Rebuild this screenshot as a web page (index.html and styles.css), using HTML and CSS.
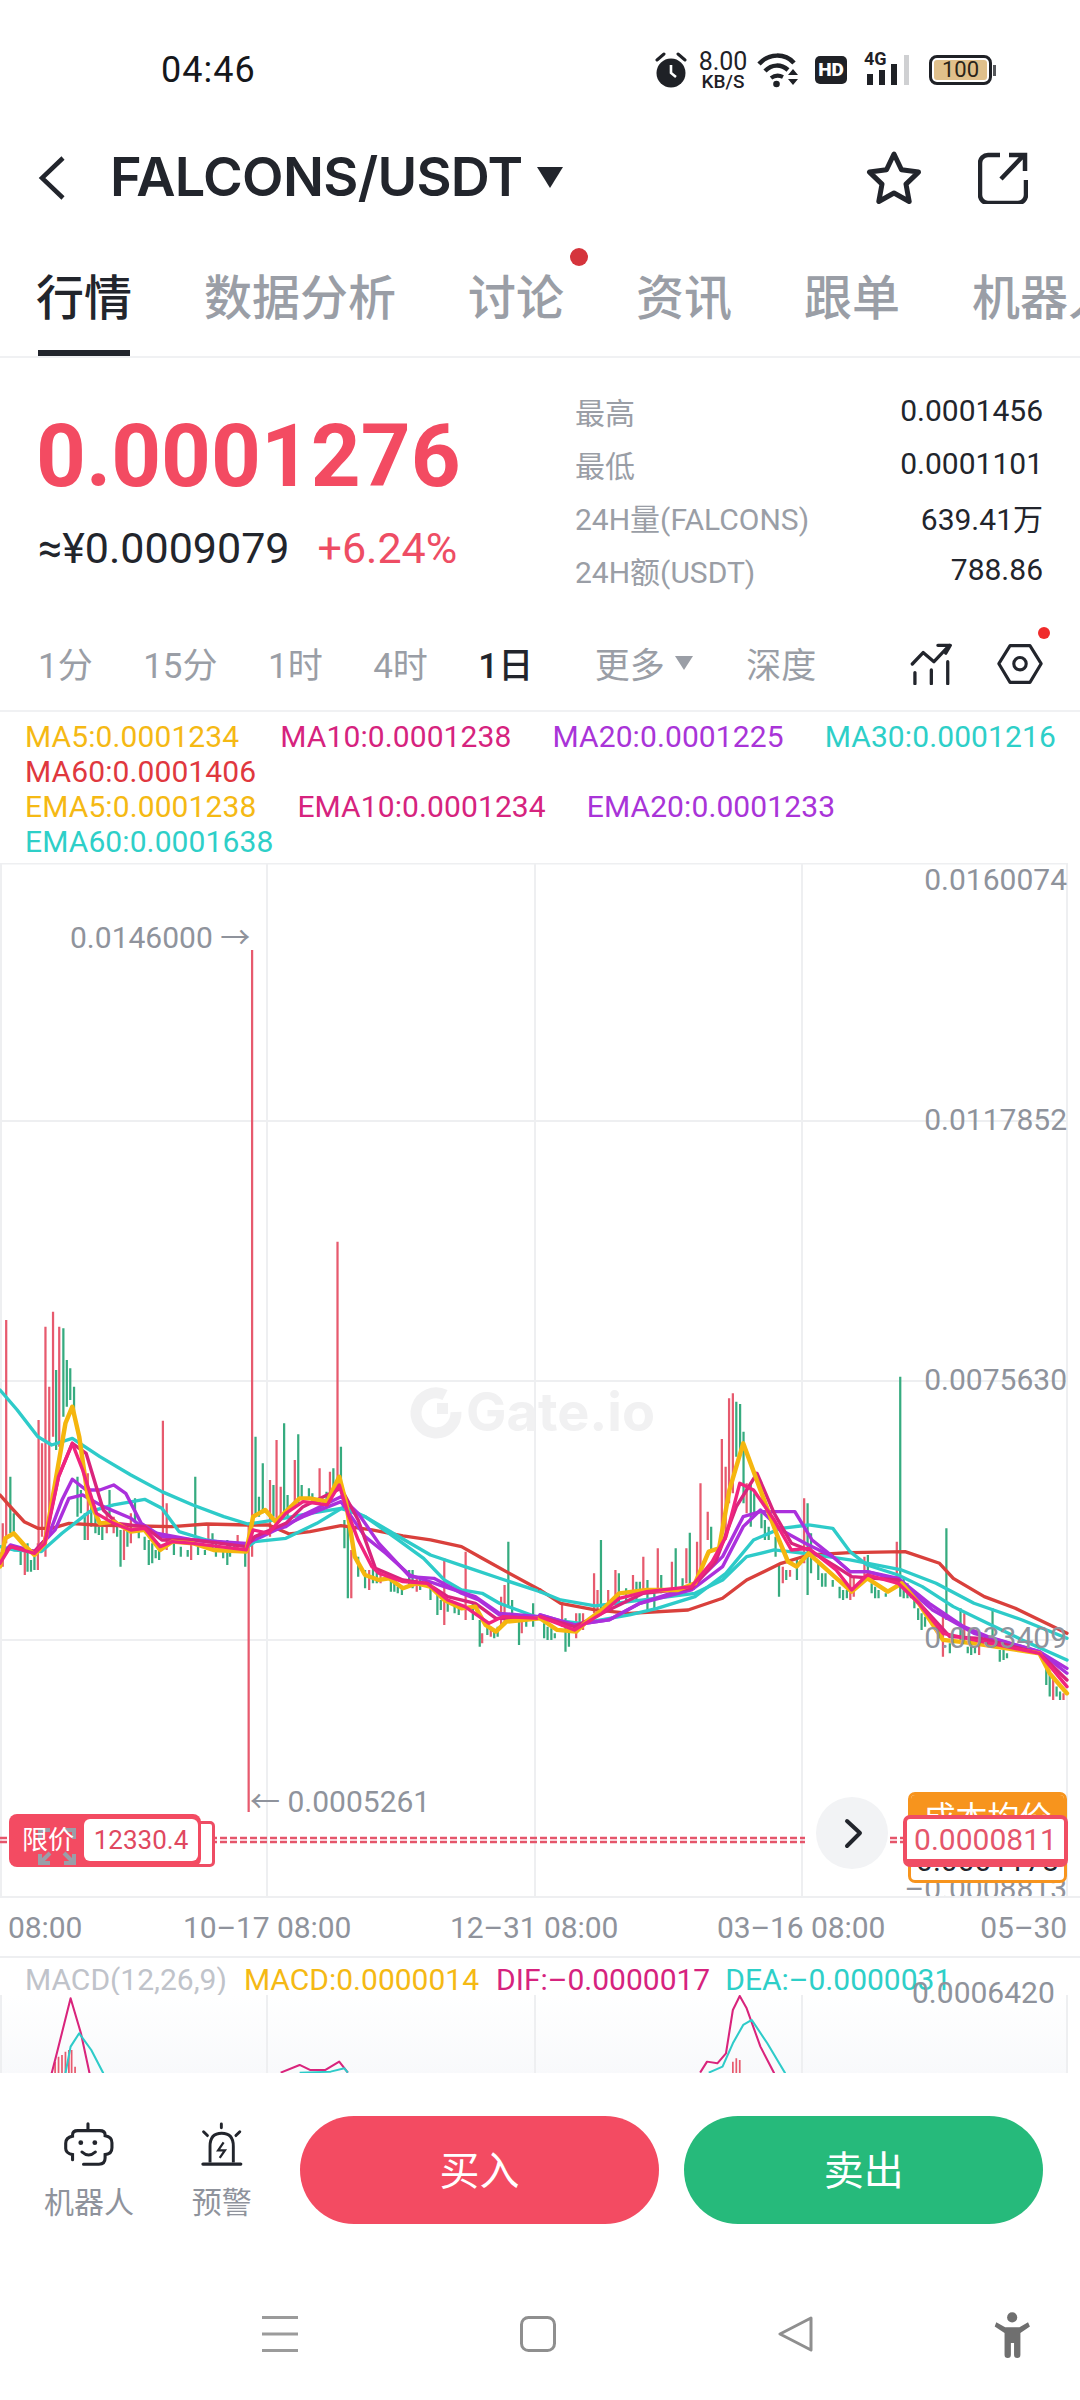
FILE: index.html
```html
<!DOCTYPE html>
<html lang="zh">
<head>
    <meta charset="utf-8">
    <title>FALCONS/USDT</title>
    <link rel="stylesheet" href="styles.css">
</head>
<body>
<div class="page">

    <!-- Status bar -->
    <div class="statusbar">
        <span class="clock">04:46</span>
        <div class="status-icons">
            <svg class="ic-alarm" viewBox="0 0 32 36"><circle cx="16" cy="21" r="14.5" fill="#1f2126"/><path d="M16 13v8l5 4" fill="none" stroke="#fff" stroke-width="2.6"/><path d="M2 8l7-6M30 8l-7-6" stroke="#1f2126" stroke-width="3" stroke-linecap="round"/></svg>
            <div class="speed"><span class="speed-num">8.00</span><span class="speed-unit">KB/S</span></div>
            <svg class="ic-wifi" viewBox="0 0 42 36"><path d="M2 12C12 1 28 1 37 11" fill="none" stroke="#1f2126" stroke-width="4.5"/><path d="M8 19c7-7 16-7 23-1" fill="none" stroke="#1f2126" stroke-width="4.5"/><path d="M14 26c4-3 8-3 12-1" fill="none" stroke="#1f2126" stroke-width="4"/><circle cx="19.500" cy="32" r="3.300" fill="#1f2126"/><path d="M31 23l5-6 5 6zM31 27l5 6 5-6z" fill="#1f2126"/></svg>
            <span class="hd">HD</span>
            <div class="signal">
                <span class="signal-g">4G</span>
                <svg class="ic-bars" viewBox="0 0 45 32"><path d="M3 20h6v11H3zM15 16h6v15h-6zM27 10h6v21h-6z" fill="#1f2126"/><path d="M40 1h5v30h-5z" fill="#cfd0d2"/></svg>
            </div>
            <div class="battery"><span class="battery-level">100</span></div>
        </div>
    </div>

    <!-- Title -->
    <div class="topbar">
        <svg class="ic-back" viewBox="0 0 28 44"><path d="M25 2L4 22l21 20" fill="none" stroke="#22252c" stroke-width="4.500"/></svg>
        <span class="pair">FALCONS/USDT</span>
        <span class="pair-caret"></span>
        <svg class="ic-star" viewBox="0 0 56 54"><path d="M28 3l7.500 15.800 17 2.300-12.500 12 3.200 17.400L28 42l-15.200 8.500L16 33.100 3.500 21.100l17-2.300z" fill="none" stroke="#22252c" stroke-width="5" stroke-linejoin="round"/></svg>
        <svg class="ic-share" viewBox="0 0 50 52"><path d="M22 3H10a8 8 0 0 0-8 8v32a8 8 0 0 0 8 8h30a8 8 0 0 0 8-8V28" fill="none" stroke="#22252c" stroke-width="4.500"/><path d="M23 27L46 3M31 3h16v16" fill="none" stroke="#22252c" stroke-width="4.500"/></svg>
    </div>

    <!-- Tabs -->
    <div class="tabs">
        <span class="tab active">行情</span>
        <span class="tab">数据分析</span>
        <span class="tab">讨论<i class="tab-dot"></i></span>
        <span class="tab">资讯</span>
        <span class="tab">跟单</span>
        <span class="tab">机器人</span>
    </div>

    <!-- Price summary -->
    <div class="summary">
        <div class="summary-left">
            <div class="price">0.0001276</div>
            <div class="price-sub"><span class="fiat">≈¥0.0009079</span><span class="change">+6.24%</span></div>
        </div>
        <div class="stats">
            <div class="stat"><span class="stat-label">最高</span><span class="stat-value">0.0001456</span></div>
            <div class="stat"><span class="stat-label">最低</span><span class="stat-value">0.0001101</span></div>
            <div class="stat"><span class="stat-label">24H量(FALCONS)</span><span class="stat-value">639.41万</span></div>
            <div class="stat"><span class="stat-label">24H额(USDT)</span><span class="stat-value">788.86</span></div>
        </div>
    </div>

    <!-- Periods -->
    <div class="periods">
        <span class="period">1分</span>
        <span class="period">15分</span>
        <span class="period">1时</span>
        <span class="period">4时</span>
        <span class="period current">1日</span>
        <span class="period more">更多<i class="more-caret"></i></span>
        <span class="period depth">深度</span>
        <svg class="ic-indicator" viewBox="56 68 126 128"><path d="M62 132L95 97l33 28 47-50M140 75h38l-14 24" fill="none" stroke="#22252c" stroke-width="10" stroke-linecap="round" stroke-linejoin="round"/><path d="M70 158v34M120 150v42M170 125v67" fill="none" stroke="#22252c" stroke-width="10" stroke-linecap="round"/></svg>
        <div class="settings">
            <svg class="ic-hex" viewBox="316 66 148 130"><path d="M358 72h64l36 58-36 60h-64l-36-60z" fill="none" stroke="#22252c" stroke-width="10" stroke-linejoin="round"/><circle cx="390" cy="130" r="20" fill="none" stroke="#22252c" stroke-width="10"/></svg>
            <i class="settings-dot"></i>
        </div>
    </div>

    <!-- Indicator legend -->
    <div class="legend">
        <div class="legend-row">
            <span class="c-yellow">MA5:0.0001234</span>
            <span class="c-pink">MA10:0.0001238</span>
            <span class="c-purple">MA20:0.0001225</span>
            <span class="c-teal">MA30:0.0001216</span>
            <span class="c-red">MA60:0.0001406</span>
        </div>
        <div class="legend-row">
            <span class="c-yellow">EMA5:0.0001238</span>
            <span class="c-pink">EMA10:0.0001234</span>
            <span class="c-purple">EMA20:0.0001233</span>
            <span class="c-teal">EMA60:0.0001638</span>
        </div>
    </div>

    <!-- Candle chart -->
    <div class="chart">
        <svg class="chart-svg" viewBox="0 863 1080 1035">
            <g class="grid">
                <path d="M0 863.500H1067M0 1121H1067M0 1381H1067M0 1640H1067M1 863V1898M267 863V1898M535 863V1898M802 863V1898M1067 863V1898"/>
            </g>
            <text class="watermark" x="466" y="1431">Gate.io</text>
            <path class="watermark-logo" d="M445 1395a20 20 0 1 0 11 17"/>
            <rect class="watermark-dot" x="437" y="1403" width="11" height="11"/>

            <g transform="translate(0,1250) scale(.3444,.3333)">
                <path class="wick up" d="M18 210V880M8 820V950M72 900V975M110 880V960M112 510V900M122 580V860M132 230V920M143 410V800M154 185V560M172 230V590M255 670V870M310 790V850M330 800V850M360 840V930M380 790V880M473 512V850M484 760V900M555 880V930M605 820V880M690 855V905M722 820V1686M732 -900V920M784 690V860M803 570V830M815 710V800M856 630V760M928 655V760M958 665V750M980 -25V720M1020 900V1045M1072 960V1020M1105 960V1000M1210 980V1025M1290 925V1125M1352 905V1110M1400 1150V1180M1425 1130V1160M1455 1040V1130M1465 1005V1120M1515 1115V1150"/>
                <path class="wick down" d="M30 680V850M40 790V850M60 900V945M80 880V965M90 930V965M100 920V960M163 360V600M184 235V500M194 330V470M204 355V450M215 410V500M225 680V800M235 720V790M246 790V870M265 770V830M277 790V850M287 830V855M297 830V870M318 720V800M340 820V860M350 840V950M370 840V890M392 745V820M403 840V865M420 860V900M432 870V945M442 880V940M452 900V925M462 880V930M505 880V915M525 890V920M545 900V920M567 680V860M575 890V915M595 900V915M617 850V900M627 880V920M648 900V925M660 870V945M668 880V920M680 885V900M712 900V950M742 560V800M752 740V800M763 640V790M794 705V800M825 520V790M835 735V800M866 553V760M876 705V750M897 715V750M907 730V760M948 725V760M968 655V710M990 590V700M1000 810V895M1010 830V1045M1040 920V980M1060 960V1015M1083 950V1000M1094 965V1000M1135 985V1025M1145 1000V1025M1155 1010V1030M1167 1010V1035M1188 960V1005M1198 960V1015M1220 985V1020M1250 1000V1050M1270 1030V1095M1280 1050V1080M1300 1050V1085M1320 1065V1090M1332 1070V1095M1373 1060V1110M1393 1110V1190M1415 1130V1155M1435 1140V1165M1445 1130V1160M1476 875V1070M1487 1050V1110M1507 1110V1185M1528 1090V1130M1548 1060V1130"/>
                <polyline class="ln ln-red" points="0,735 30,770 70,815 110,835 150,835 200,820 280,825 400,828 500,830 600,822 720,825 780,825 840,852 900,845 990,827 1080,840 1170,858 1250,870 1340,890 1400,925 1470,965 1568,1020"/>
                <polyline class="ln ln-teal" points="0,420 50,480 110,560 150,585 210,565 290,620 380,675 470,725 560,765 650,800 720,822 800,810 900,790 990,775 1060,800 1150,855 1250,915 1350,950 1450,985 1568,1025"/>
                <polyline class="ln ln-teal" points="0,890 40,900 120,905 180,850 260,785 330,765 420,748 470,775 520,845 600,870 720,890 740,875 830,865 920,820 1000,770 1060,800 1150,865 1230,925 1290,990 1340,1020 1400,1030 1450,1060 1568,1105"/>
                <polyline class="ln ln-purple" points="0,915 30,890 100,905 160,840 200,745 240,735 300,770 380,805 430,845 560,870 715,880 760,860 880,800 990,755 1060,860 1120,910 1190,975 1290,1010 1380,1040 1450,1090 1568,1100"/>
                <polyline class="ln ln-purple" points="0,920 30,885 100,905 140,860 180,750 210,688 250,720 290,720 330,705 365,730 410,820 470,860 560,870 715,885 760,850 830,830 880,795 990,740 1040,790 1100,880 1190,980 1260,985 1340,1030 1390,1050 1450,1095 1568,1105"/>
                <polyline class="ln ln-pink" points="0,925 30,890 100,905 130,870 170,680 210,580 250,610 300,780 340,820 420,830 470,870 560,870 715,890 740,860 830,820 880,770 990,715 1040,810 1090,955 1170,990 1240,1000 1300,1040 1380,1060 1440,1105 1568,1105"/>
                <polyline class="ln ln-yellow" points="0,950 15,865 40,850 70,885 100,915 130,880 160,700 190,520 210,470 230,560 255,740 290,820 330,815 380,845 420,840 465,900 500,875 560,880 620,900 715,905 735,800 770,780 800,815 830,785 870,745 900,745 950,755 985,680 1005,760 1030,920 1060,975 1100,990 1130,985 1170,1015 1210,1000 1250,1010 1290,1050 1340,1075 1380,1070 1410,1125 1440,1145 1470,1115 1568,1105"/>
                <polyline class="ln ln-hot" points="0,940 30,890 100,910 130,880 170,680 210,580 240,660 280,790 330,820 380,840 420,835 465,890 500,875 560,880 715,900 735,840 780,850 830,790 880,755 950,765 985,705 1010,790 1040,870 1080,950 1100,970 1170,995 1240,1000 1300,1050 1350,1070 1420,1120 1460,1100 1568,1105"/>
            </g>

            <g transform="translate(540,1250) scale(.3444,.3333)">
                <path class="wick up" d="M64 1060V1130M105 1090V1165M125 1090V1140M157 970V1090M167 1020V1080M198 1020V1085M219 960V1040M270 975V1030M300 920V1030M342 895V1020M383 935V1020M425 895V1000M456 875V980M466 700V970M487 785V870M528 567V870M539 650V870M549 445V760M560 430V730M600 700V790M705 950V1000M726 960V980M767 745V940M901 970V1050M911 980V1040M942 920V990M1036 875V1010M1170 1090V1220M1232 1090V1180M1275 1180V1215M1490 1280V1350M1520 1330V1350"/>
                <path class="wick down" d="M12 1120V1165M22 1130V1170M33 1135V1170M43 1150V1165M74 1105V1205M84 1140V1190M115 1090V1140M177 870V1090M229 970V1060M250 1015V1050M280 995V1050M290 995V1030M312 990V1080M332 1030V1075M352 975V1030M394 895V1020M414 985V1015M435 848V1000M446 1000V1020M497 830V900M570 455V620M581 462V600M591 545V760M612 700V830M622 730V800M643 790V835M653 810V870M664 830V870M684 860V920M694 940V1040M715 960V990M746 930V990M777 760V1035M787 850V970M808 940V990M819 970V1010M829 970V1010M850 990V1010M870 1010V1045M880 1020V1050M891 1020V1045M952 915V980M963 1000V1030M973 1010V1045M983 1020V1045M1004 1030V1040M1046 380V1040M1056 985V1045M1067 1000V1045M1077 1020V1045M1087 1050V1075M1098 1075V1110M1108 1090V1140M1118 1100V1130M1180 835V1110M1190 1180V1210M1221 1075V1170M1242 1190V1210M1252 1190V1215M1263 1190V1210M1314 1075V1170M1335 1200V1235M1346 1200V1230M1356 1210V1225M1470 1240V1305M1480 1270V1340M1500 1310V1340M1510 1325V1350"/>
                <polyline class="ln ln-red" points="0,1020 60,1060 160,1080 260,1090 430,1080 530,1045 600,990 700,940 780,915 900,908 1060,905 1160,940 1200,985 1290,1040 1380,1075 1530,1150"/>
                <polyline class="ln ln-teal" points="0,1025 60,1050 160,1068 300,1050 450,1030 530,990 600,920 680,900 780,912 900,930 1050,960 1150,1000 1260,1060 1400,1110 1530,1165"/>
                <polyline class="ln ln-teal" points="0,1105 120,1120 260,1095 340,1075 450,1040 540,970 620,870 700,835 780,825 850,835 900,905 950,945 1040,975 1110,1010 1200,1070 1280,1110 1400,1170 1530,1230"/>
                <polyline class="ln ln-purple" points="0,1095 100,1125 200,1110 290,1060 440,1020 530,950 590,830 640,780 700,840 770,880 850,920 900,965 950,965 1040,990 1140,1080 1260,1150 1450,1205 1530,1255"/>
                <polyline class="ln ln-purple" points="0,1095 100,1125 200,1110 290,1060 440,1010 530,920 590,800 640,785 740,785 790,870 850,920 900,965 950,965 1040,985 1130,1060 1230,1130 1300,1160 1450,1205 1530,1270"/>
                <polyline class="ln ln-pink" points="0,1100 100,1130 180,1090 300,1030 440,1015 510,935 570,770 630,670 680,790 730,880 780,900 860,950 905,980 1040,990 1110,1070 1190,1160 1280,1165 1450,1210 1530,1290"/>
                <polyline class="ln ln-yellow" points="0,1105 50,1140 105,1145 140,1110 180,1080 230,1030 310,1020 400,1020 450,1000 490,905 520,895 550,720 590,580 640,720 690,860 720,935 745,950 780,910 850,975 905,1025 950,985 1010,1025 1050,1000 1100,1060 1170,1170 1260,1180 1450,1210 1480,1270 1530,1330"/>
                <polyline class="ln ln-hot" points="0,1100 100,1140 180,1090 230,1045 310,1025 440,1010 500,935 540,860 580,700 620,720 680,810 730,900 780,895 860,960 905,1020 950,975 1040,1000 1100,1060 1170,1150 1260,1170 1450,1210 1530,1310"/>
            </g>

            <!-- limit order line -->
            <path class="limit-line" d="M0 1838H805M890 1838H905M0 1842H805M890 1842H905"/>
            <circle class="next-bg" cx="852" cy="1833" r="36"/>
            <path class="next-arrow" d="M847 1821l13 12-13 13"/>
        </svg>

        <span class="axis-y" style="top: 0px">0.0160074</span>
        <span class="axis-y" style="top: 240px">0.0117852</span>
        <span class="axis-y" style="top: 500px">0.0075630</span>
        <span class="axis-y" style="top: 758px">0.0033409</span>
        <div class="axis-y-clip"><span>–0.0008813</span></div>

        <span class="mark mark-high">0.0146000 →</span>
        <span class="mark mark-low">← 0.0005261</span>

        <div class="limit-back"></div>
        <div class="limit-badge">
            <svg class="ic-expand" viewBox="0 0 38 37"><path d="M2 11V2h10M26 2h10v9M2 26v9h10M26 35h10v-9M4 33l8-8M34 33l-8-8" fill="none" stroke="#9a9ea8" stroke-width="4"/></svg>
            <span class="limit-name">限价</span>
            <span class="limit-value">12330.4</span>
        </div>

        <div class="cost">
            <span class="cost-name">成本均价</span>
            <span class="cost-value">0.0001178</span>
        </div>
        <div class="last-price">0.0000811</div>
    </div>

    <!-- Time axis -->
    <div class="axis-x">
        <span class="t1">08:00</span>
        <span class="t2">10–17 08:00</span>
        <span class="t3">12–31 08:00</span>
        <span class="t4">03–16 08:00</span>
        <span class="t5">05–30</span>
    </div>

    <!-- MACD -->
    <div class="macd">
        <div class="macd-legend">
            <span class="c-grey">MACD(12,26,9)</span>
            <span class="c-yellow">MACD:0.0000014</span>
            <span class="c-pink">DIF:–0.0000017</span>
            <span class="c-teal dea">DEA:–0.0000031</span>
        </div>
        <svg class="macd-svg" viewBox="0 1995 1080 78">
            <defs>
                <linearGradient id="macdBg" x1="0" y1="0" x2="0" y2="1">
                    <stop offset="0" stop-color="#fff"/>
                    <stop offset="1" stop-color="#f8f9fb"/>
                </linearGradient>
            </defs>
            <rect x="0" y="1995" width="1067" height="78" fill="url(#macdBg)"/>
            <g class="grid"><path d="M1 1995V2073M267 1995V2073M535 1995V2073M802 1995V2073M1067 1995V2073"/></g>
            <g transform="translate(0,1760) scale(.3444,.3333)">
                <path class="macd-bars" d="M160 905V940M170 890V940M180 885V940M190 875V940M200 870V940M208 870V940M218 920V940"/>
                <polyline class="macd-ln ln-pink" points="150,940 165,880 205,715 235,820 260,940"/>
                <polyline class="macd-ln ln-teal" points="190,940 205,860 230,820 265,870 300,940"/>
                <polyline class="macd-ln ln-pink" points="815,938 870,915 900,930 945,930 985,905 1010,938"/>
                <polyline class="macd-ln ln-teal" points="870,938 960,935 1000,925 1010,938"/>
            </g>
            <g transform="translate(540,1760) scale(.3444,.3333)">
                <path class="macd-bars" d="M560 905V940M570 895V940M580 900V940"/>
                <polyline class="macd-ln ln-pink" points="465,938 485,905 515,910 540,880 560,750 580,708 600,745 640,860 680,940"/>
                <polyline class="macd-ln ln-teal" points="490,938 530,920 560,850 590,795 615,780 660,850 712,940"/>
            </g>
        </svg>
        <span class="macd-axis">0.0006420</span>
    </div>

    <!-- Bottom actions -->
    <div class="actions">
        <div class="action robot">
            <svg class="ic-robot" viewBox="78 36 146 126"><path d="M148 40V60M135 158H180Q198 158 198 140V130Q218 128 218 110V95Q218 78 198 75V72Q198 60 182 60H118Q103 60 103 72V76Q83 80 83 97V112Q83 126 103 130V145" fill="none" stroke="#22252c" stroke-width="9" stroke-linecap="round"/><circle cx="127" cy="95" r="7" fill="#22252c"/><circle cx="168" cy="95" r="7" fill="#22252c"/><path d="M130 122Q150 140 170 122" fill="none" stroke="#22252c" stroke-width="8" stroke-linecap="round"/></svg>
            <span>机器人</span>
        </div>
        <div class="action alert">
            <svg class="ic-siren" viewBox="482 30 130 136"><path d="M510 155V105Q510 65 546 65Q582 65 582 105V155" fill="none" stroke="#22252c" stroke-width="9"/><path d="M488 160H605" stroke="#22252c" stroke-width="10" stroke-linecap="round"/><path d="M552 93L535 118H556L540 141" fill="none" stroke="#22252c" stroke-width="7"/><path d="M545 36V48M490 60L502 72M602 60L590 72" stroke="#22252c" stroke-width="9" stroke-linecap="round"/></svg>
            <span>预警</span>
        </div>
        <div class="btn btn-buy">买入</div>
        <div class="btn btn-sell">卖出</div>
    </div>

    <!-- System navigation -->
    <div class="sysnav">
        <svg class="ic-menu" viewBox="0 0 36 36"><path d="M0 1.500h36M0 18h36M0 34.500h36" stroke="#9b9b9b" stroke-width="3"/></svg>
        <svg class="ic-home" viewBox="0 0 36 36"><rect x="1.500" y="1.500" width="33" height="33" rx="7" fill="none" stroke="#8f8f8f" stroke-width="3"/></svg>
        <svg class="ic-tri" viewBox="0 0 36 36"><path d="M33 2L2 18l31 16z" fill="none" stroke="#8f8f8f" stroke-width="3" stroke-linejoin="round"/></svg>
        <svg class="ic-person" viewBox="25 30 113 145"><circle cx="82" cy="47" r="16" fill="#6f6f6f"/><path d="M32 62L60 78H105L132 62L138 76L108 96V165a10 10 0 0 1-20 0V128H78V165a10 10 0 0 1-20 0V96L27 76Z" fill="#6f6f6f"/></svg>
    </div>
</div>
</body>
</html>
```

FILE: styles.css
```css
* {
    box-sizing: border-box;
}

body {
    margin: 0;
    background: #fff;
    font-family: Roboto, "Noto Sans CJK SC", sans-serif;
    color: #22252c;
}

.page {
    width: 1080px;
    height: 2400px;
    overflow: hidden;
}

/* Status bar */
.statusbar {
    height: 130px;
    display: flex;
    align-items: center;
    padding: 10px 88px 0 161px;
    justify-content: space-between;
}

.clock {
    font-size: 36px;
    letter-spacing: 1px;
    color: #15171b;
}

.status-icons {
    display: flex;
    align-items: center;
}

.ic-alarm {
    width: 32px;
    height: 36px;
}

.speed {
    display: flex;
    flex-direction: column;
    align-items: center;
    width: 52px;
    margin-left: 10px;
    color: #1f2126;
}

.speed-num {
    font-size: 25px;
    line-height: 22px;
}

.speed-unit {
    font-size: 19px;
    line-height: 17px;
    font-weight: 500;
}

.ic-wifi {
    width: 42px;
    height: 36px;
    margin-left: 8px;
}

.hd {
    width: 32px;
    height: 28px;
    margin-left: 16px;
    background: #1f2126;
    color: #fff;
    border-radius: 5px;
    font-size: 19px;
    font-weight: 900;
    line-height: 28px;
    text-align: center;
}

.signal {
    position: relative;
    width: 45px;
    height: 32px;
    margin-left: 17px;
}

.signal-g {
    position: absolute;
    left: 0;
    top: -4px;
    font-size: 18px;
    line-height: 18px;
    font-weight: 700;
    color: #1f2126;
}

.ic-bars {
    width: 45px;
    height: 32px;
    display: block;
}

.battery {
    position: relative;
    width: 63px;
    height: 30px;
    margin-left: 20px;
    border: 3px solid #1f2126;
    border-radius: 8px;
    padding: 2px;
}

.battery:after {
    content: "";
    position: absolute;
    right: -7px;
    top: 7px;
    width: 3px;
    height: 11px;
    background: #55575b;
}

.battery-level {
    display: block;
    height: 20px;
    background: #e0c08b;
    border-radius: 3px;
    font-size: 22px;
    line-height: 20px;
    text-align: center;
    color: #2a2418;
}

/* Title */
.topbar {
    height: 95px;
    display: flex;
    align-items: center;
    padding: 0 52px 0 38px;
}

.ic-back {
    width: 28px;
    height: 44px;
}

.pair {
    margin-left: 44px;
    font-family: Inter, Roboto, sans-serif;
    font-size: 54px;
    line-height: 60px;
    margin-top: -2px;
    font-weight: 600;
    letter-spacing: -0.7px;
    color: #22252c;
}

.pair-caret {
    margin-left: 15px;
    width: 0;
    height: 0;
    border-left: 13px solid transparent;
    border-right: 13px solid transparent;
    border-top: 21px solid #22252c;
}

.ic-star {
    margin-left: auto;
    width: 56px;
    height: 54px;
}

.ic-share {
    margin-left: 56px;
    width: 50px;
    height: 52px;
}

/* Tabs */
.tabs {
    height: 133px;
    display: flex;
    gap: 72px;
    padding: 49px 0 0 36px;
    border-bottom: 2px solid #f0f1f3;
    white-space: nowrap;
    overflow: hidden;
}

.tab {
    position: relative;
    height: 82px;
    font-size: 48px;
    line-height: 50px;
    font-weight: 500;
    color: #9a9ea6;
    flex-shrink: 0;
}

.tab.active {
    color: #22252c;
}

.tab.active:after {
    content: "";
    position: absolute;
    left: 2px;
    right: 2px;
    bottom: 0;
    height: 6px;
    background: #22252c;
}

.tab-dot {
    position: absolute;
    right: -24px;
    top: -26px;
    width: 18px;
    height: 18px;
    border-radius: 50%;
    background: #d5343c;
}

/* Price summary */
.summary {
    height: 266px;
    display: flex;
}

.summary-left {
    width: 575px;
    padding: 48px 0 0 36px;
}

.price {
    height: 100px;
    font-size: 87px;
    line-height: 100px;
    font-weight: 700;
    color: #f34b62;
}

.price-sub {
    margin-top: 17px;
    margin-left: 2px;
    display: flex;
    align-items: center;
    height: 50px;
    font-size: 43px;
    line-height: 50px;
}

.fiat {
    color: #22252c;
}

.change {
    margin-left: 28px;
    color: #ee4d64;
}

.stats {
    width: 468px;
    padding-top: 26px;
}

.stat {
    height: 53px;
    display: flex;
    justify-content: space-between;
    align-items: center;
    font-size: 30px;
}

.stat-label {
    color: #9a9ea6;
}

.stat-value {
    color: #22252c;
}

/* Periods */
.periods {
    height: 88px;
    display: flex;
    align-items: center;
    gap: 50.500px;
    padding: 0 37px 9px 38px;
    border-bottom: 2px solid #f0f1f3;
    font-size: 35px;
    color: #9a9ea6;
}

.period.current {
    color: #22252c;
    font-weight: 500;
}

.period.more {
    margin-left: 11px;
    display: flex;
    align-items: center;
}

.more-caret {
    margin-left: 10px;
    width: 0;
    height: 0;
    border-left: 9px solid transparent;
    border-right: 9px solid transparent;
    border-top: 14px solid #9a9ea6;
}

.period.depth {
    margin-left: 3px;
}

.ic-indicator {
    margin-left: auto;
    margin-top: 3px;
    width: 42px;
    height: 42px;
}

.settings {
    position: relative;
    width: 46px;
    height: 42px;
    margin-left: -5px;
    margin-top: 3px;
}

.ic-hex {
    display: block;
    width: 46px;
    height: 42px;
}

.settings-dot {
    position: absolute;
    right: -7px;
    top: -16px;
    width: 12px;
    height: 12px;
    border-radius: 50%;
    background: #f02b2b;
}

/* Legend */
.legend {
    height: 151px;
    padding: 7px 0 0 25px;
    font-size: 30px;
    line-height: 35px;
    letter-spacing: 0.1px;
    white-space: nowrap;
}

.legend-row {
    display: flex;
    flex-wrap: wrap;
    column-gap: 41px;
    width: 1040px;
}

.c-yellow { color: #f5b914; }
.c-pink { color: #d6237e; }
.c-purple { color: #a934d8; }
.c-teal { color: #2ecfc8; }
.c-red { color: #e0383e; }
.c-grey { color: #c0c3ca; }

/* Chart */
.chart {
    position: relative;
    height: 1035px;
    overflow: hidden;
    font-size: 30px;
    color: #8f939c;
    border-bottom: 2px solid #eeeff1;
}

.chart-svg {
    display: block;
    width: 1080px;
    height: 1035px;
}

.grid path {
    fill: none;
    stroke: #eeeff1;
    stroke-width: 2;
}

.watermark {
    font-family: Inter, Roboto, sans-serif;
    font-size: 54px;
    font-weight: 700;
    fill: #f1f1f2;
}

.watermark-logo {
    fill: none;
    stroke: #f1f1f2;
    stroke-width: 11;
}

.watermark-dot {
    fill: #f1f1f2;
}

.wick {
    fill: none;
    stroke-width: 6.500;
}

.wick.up { stroke: #e75a6e; }
.wick.down { stroke: #36ab7f; }

.ln {
    fill: none;
    stroke-width: 10;
    stroke-linejoin: round;
    stroke-linecap: round;
}

.ln-red { stroke: #d9403c; }
.ln-teal { stroke: #2ecbc9; }
.ln-purple { stroke: #ab30dc; }
.ln-pink { stroke: #d9247c; }
.ln-hot { stroke: #f0247e; }
.ln-yellow { stroke: #f5b60e; stroke-width: 13; }

.limit-line {
    fill: none;
    stroke: #e5566b;
    stroke-width: 2.500;
    stroke-dasharray: 7 3;
}

.next-bg {
    fill: #f2f3f5;
}

.next-arrow {
    fill: none;
    stroke: #22252c;
    stroke-width: 4;
    stroke-linejoin: round;
    stroke-linecap: round;
}

.axis-y {
    position: absolute;
    right: 13px;
    line-height: 34px;
}

.axis-y-clip {
    position: absolute;
    right: 13px;
    top: 1009px;
    line-height: 34px;
}

.mark {
    position: absolute;
    line-height: 34px;
    white-space: nowrap;
}

.mark-high {
    left: 70px;
    top: 58px;
}

.mark-low {
    left: 250px;
    top: 922px;
}

.limit-back {
    position: absolute;
    left: 150px;
    top: 958px;
    width: 65px;
    height: 46px;
    background: #fff;
    border: 3px solid #ee4d64;
    border-radius: 5px;
}

.limit-badge {
    position: absolute;
    left: 9px;
    top: 951px;
    width: 192px;
    height: 53px;
    padding: 5px 3px 6px 13px;
    display: flex;
    align-items: center;
    background: #f34b62;
    border-radius: 8px;
}

.ic-expand {
    position: absolute;
    left: 29px;
    top: 14px;
    width: 38px;
    height: 37px;
}

.limit-name {
    position: relative;
    font-size: 26px;
    line-height: 36px;
    color: #fff;
    white-space: nowrap;
}

.limit-value {
    margin-left: 10px;
    flex: 1;
    height: 42px;
    background: #fff;
    border-radius: 6px;
    font-size: 26px;
    line-height: 42px;
    text-align: center;
    color: #e0485f;
}

.cost {
    position: absolute;
    left: 908px;
    top: 929px;
    width: 159px;
    height: 91px;
    background: #fff;
    border: 3px solid #f7941d;
    border-radius: 7px;
    overflow: hidden;
    text-align: center;
    white-space: nowrap;
}

.cost-name {
    display: block;
    height: 50px;
    background: #f7941d;
    color: #fff;
    font-size: 32px;
    line-height: 46px;
}

.cost-value {
    display: block;
    font-size: 30px;
    line-height: 30px;
    margin-top: 1px;
    color: #22252c;
}

.last-price {
    position: absolute;
    left: 903px;
    top: 952px;
    width: 165px;
    height: 52px;
    background: #fff;
    border: 4px solid #f04d63;
    border-bottom-width: 8px;
    border-radius: 7px;
    font-size: 30px;
    line-height: 42px;
    text-align: center;
    color: #e5566b;
}

/* Time axis */
.axis-x {
    position: relative;
    height: 60px;
    border-bottom: 2px solid #eeeff1;
    font-size: 30px;
    line-height: 60px;
    letter-spacing: -0.1px;
    color: #8f939c;
}

.axis-x span {
    position: absolute;
    white-space: nowrap;
}

.t1 { left: 8px; }
.t2 { left: 183px; }
.t3 { left: 450px; }
.t4 { left: 717px; }
.t5 { right: 13px; }

/* MACD */
.macd {
    position: relative;
    height: 115px;
}

.macd-legend {
    height: 37px;
    padding-left: 25px;
    display: flex;
    gap: 17px;
    font-size: 30px;
    line-height: 44px;
    white-space: nowrap;
}

.macd-legend .dea {
    margin-left: -2px;
}

.macd-svg {
    display: block;
    width: 1080px;
    height: 78px;
}

.macd-ln {
    fill: none;
    stroke-width: 6;
    stroke-linejoin: round;
}

.macd-bars {
    fill: none;
    stroke: #e75a6e;
    stroke-width: 5;
}

.macd-axis {
    position: absolute;
    left: 912px;
    top: 18px;
    font-size: 30px;
    line-height: 34px;
    color: #8f939c;
}

/* Bottom actions */
.actions {
    height: 207px;
    display: flex;
    align-items: flex-start;
    padding: 43px 37px 0 0;
    background: #fff;
}

.action {
    display: flex;
    flex-direction: column;
    align-items: center;
    font-size: 30px;
    line-height: 40px;
    color: #8f939c;
}

.action svg {
    display: block;
    height: 44px;
    margin: 6px 0 17px;
}

.action.robot {
    width: 178px;
}

.action.alert {
    width: 44px;
    margin-left: 22px;
    white-space: nowrap;
}

.ic-robot { width: 50px; }
.ic-siren { width: 44px; }

.btn {
    height: 108px;
    width: 360px;
    border-radius: 54px;
    font-size: 40px;
    line-height: 112px;
    text-align: center;
    color: #fff;
}

.btn-buy {
    margin-left: 56px;
    background: #f34b62;
}

.btn-sell {
    margin-left: 24px;
    width: 359px;
    margin-left: 25px;
    background: #26ba7b;
}

/* System navigation */
.sysnav {
    height: 120px;
    position: relative;
    display: flex;
    align-items: flex-start;
    padding: 36px 0 0 262px;
}

.ic-menu, .ic-home, .ic-tri {
    width: 36px;
    height: 36px;
}

.ic-home {
    margin-left: 222px;
}

.ic-tri {
    margin-left: 222px;
}

.ic-person {
    width: 36px;
    height: 46px;
    margin-left: 180px;
    margin-top: -4px;
}
```
